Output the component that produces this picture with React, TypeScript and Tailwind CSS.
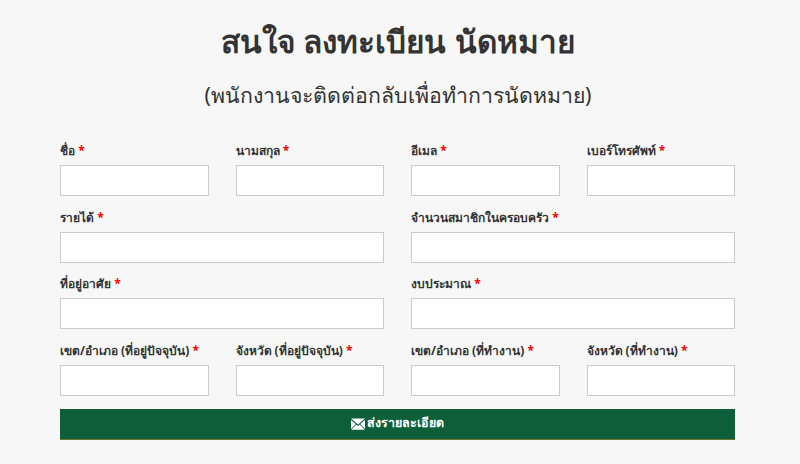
const Field = ({ label }: { label: string }) => (
  <div className="flex flex-col min-w-0">
    <label className="text-[12px] leading-[18px] font-bold text-[#333] whitespace-nowrap h-[23px]">
      {label} <span className="text-[#ff0000]">*</span>
    </label>
    <input className="h-[31px] w-full bg-white border border-[#ccc]" />
  </div>
);

const Half = ({ children }: { children: React.ReactNode }) => (
  <div className="grid grid-cols-2 gap-x-[27px]">{children}</div>
);

export default function App() {
  return (
    <div className="w-[800px] h-[464px] overflow-hidden bg-[#f7f7f7] font-['Noto_Sans','DejaVu_Sans',sans-serif]">
      <div className="pt-[18px] pr-[4px] text-center text-[#333]">
        <h1 className="text-[31.5px] leading-[46px] font-bold">สนใจ ลงทะเบียน นัดหมาย</h1>
        <h2 className="mt-[14px] text-[21.3px] leading-[34px]">(พนักงานจะติดต่อกลับเพื่อทำการนัดหมาย)</h2>
      </div>

      <form className="ml-[60px] mr-[65px] mt-[30px] flex flex-col">
        <div className="grid grid-cols-2 gap-x-[27px] gap-y-[12.5px]">
          <Half>
            <Field label="ชื่อ" />
            <Field label="นามสกุล" />
          </Half>
          <Half>
            <Field label="อีเมล" />
            <Field label="เบอร์โทรศัพท์" />
          </Half>
          <Field label="รายได้" />
          <Field label="จำนวนสมาชิกในครอบครัว" />
          <Field label="ที่อยู่อาศัย" />
          <Field label="งบประมาณ" />
          <Half>
            <Field label="เขต/อำเภอ (ที่อยู่ปัจจุบัน)" />
            <Field label="จังหวัด (ที่อยู่ปัจจุบัน)" />
          </Half>
          <Half>
            <Field label="เขต/อำเภอ (ที่ทำงาน)" />
            <Field label="จังหวัด (ที่ทำงาน)" />
          </Half>
        </div>
        <button
          type="button"
          className="mt-[13px] h-[31px] bg-[#0d5f3a] border-b border-[#6b7a2a] text-white text-[12.5px] font-bold flex items-center justify-center gap-[2px]"
        >
          <svg width="14" height="12" viewBox="0 0 14 12" fill="white">
            <path d="M0 0.5h14L7 6.5 0 0.5z" />
            <path d="M0 2v9l4.7-5L0 2zM14 2v9L9.3 6 14 2zM5.3 6.6 7 8l1.7-1.4 5 5.1H.3l5-5.1z" />
          </svg>
          ส่งรายละเอียด
        </button>
      </form>
    </div>
  );
}
